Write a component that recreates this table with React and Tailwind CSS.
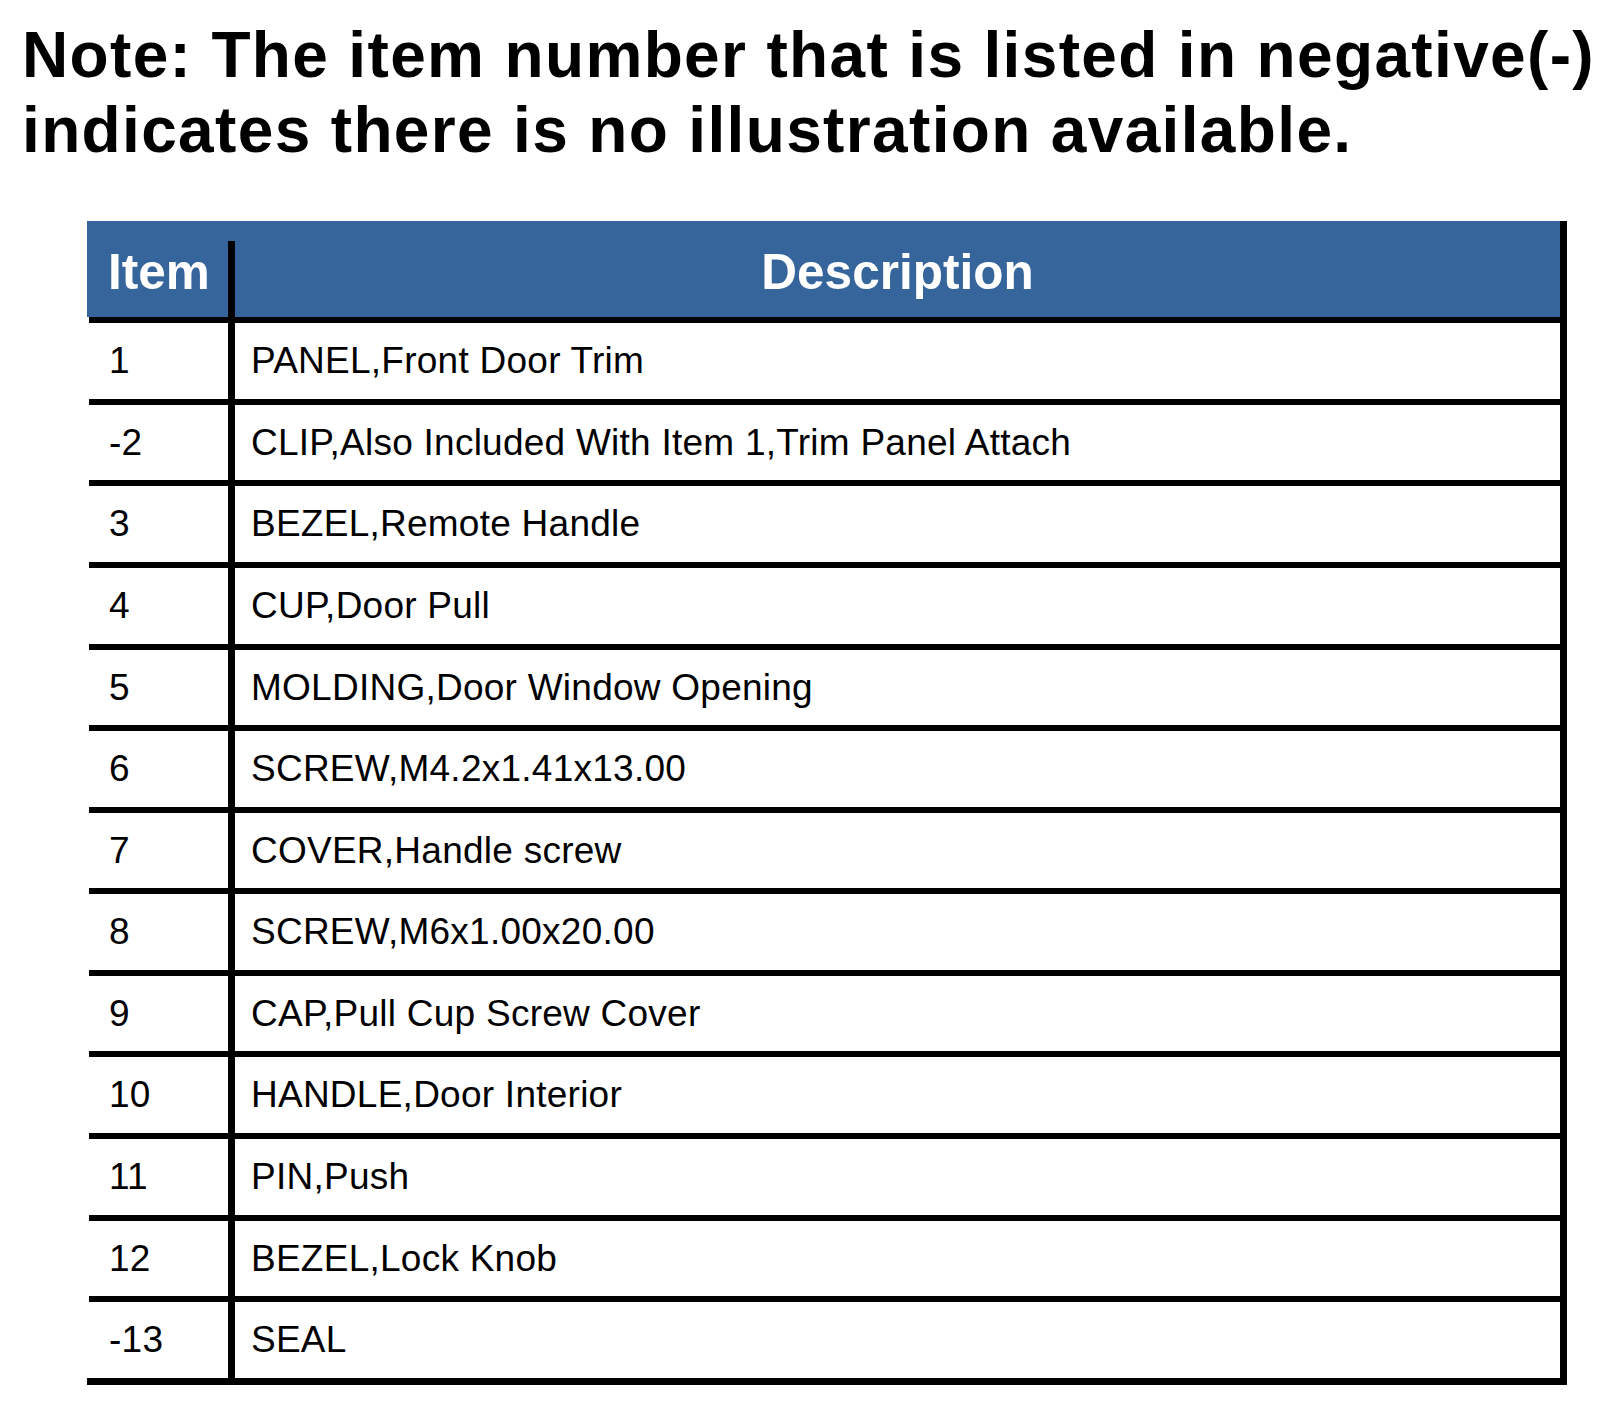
import React from "react";

const rows = [
  { item: "1", desc: "PANEL,Front Door Trim", h: "h-[76px]" },
  { item: "-2", desc: "CLIP,Also Included With Item 1,Trim Panel Attach", h: "h-[75px]" },
  { item: "3", desc: "BEZEL,Remote Handle", h: "h-[76px]" },
  { item: "4", desc: "CUP,Door Pull", h: "h-[76px]" },
  { item: "5", desc: "MOLDING,Door Window Opening", h: "h-[75px]" },
  { item: "6", desc: "SCREW,M4.2x1.41x13.00", h: "h-[76px]" },
  { item: "7", desc: "COVER,Handle screw", h: "h-[75px]" },
  { item: "8", desc: "SCREW,M6x1.00x20.00", h: "h-[76px]" },
  { item: "9", desc: "CAP,Pull Cup Screw Cover", h: "h-[75px]" },
  { item: "10", desc: "HANDLE,Door Interior", h: "h-[76px]" },
  { item: "11", desc: "PIN,Push", h: "h-[76px]" },
  { item: "12", desc: "BEZEL,Lock Knob", h: "h-[75px]" },
  { item: "-13", desc: "SEAL", h: "h-[76px]" },
];

export default function App() {
  return (
    <div className="w-[1600px] h-[1408px] bg-white text-black font-['Liberation_Sans',Arial,sans-serif] overflow-hidden">
      <div className="pt-[18px] pl-[22px] text-[64px] leading-[75px] font-bold tracking-[1.35px] whitespace-nowrap">
        <div>Note: The item number that is listed in negative(-)</div>
        <div>indicates there is no illustration available.</div>
      </div>

      <div className="ml-[87px] mt-[53px] w-[1480px] border-r-[7px] border-black">
        <div className="flex h-[96px] bg-[#35659b] text-white font-bold text-[49.5px]">
          <div className="w-[141px] pl-[21px] pt-[6px] flex items-center">Item</div>
          <div className="w-[7px] mt-[20px] bg-black"></div>
          <div className="flex-1 pt-[6px] flex items-center justify-center">Description</div>
        </div>
        <div className="ml-[2px] h-[6px] bg-black"></div>

        {rows.map((r, i) => (
          <div key={i}>
            <div className={`flex ${r.h} text-[37px] tracking-[0.25px]`}>
              <div className="w-[141px] pl-[22px] flex items-center">{r.item}</div>
              <div className="w-[7px] bg-black"></div>
              <div className="flex-1 pl-[16px] flex items-center whitespace-nowrap">{r.desc}</div>
            </div>
            {i < rows.length - 1 ? (
              <div className="ml-[2px] h-[6px] bg-black"></div>
            ) : (
              <div className="h-[7px] bg-black"></div>
            )}
          </div>
        ))}
      </div>
    </div>
  );
}
